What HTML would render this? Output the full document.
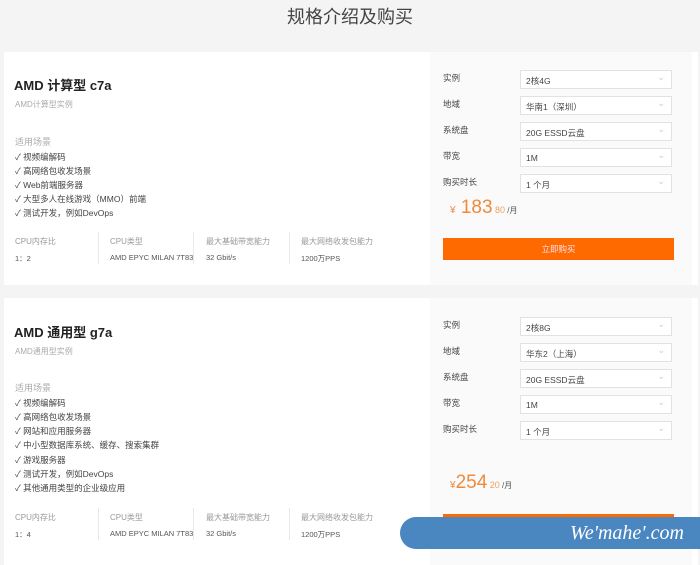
<!DOCTYPE html>
<html><head><meta charset="utf-8"><style>
*{margin:0;padding:0;box-sizing:border-box}
body{width:700px;height:565px;overflow:hidden;background:#f4f4f4;font-family:"Liberation Sans","Noto Sans CJK SC",sans-serif;position:relative;color:#333}
.t{position:absolute;left:0;width:700px;text-align:center;top:3px;font-size:18px;color:#444}
.card{position:absolute;left:4px;width:694px;background:#fff}
.r{position:absolute;left:426px;top:0;bottom:0;right:6px;background:#fafafa}
.a{position:absolute;white-space:nowrap}
h2{position:absolute;left:14px;font-size:13px;font-weight:bold;color:#222}
.sub{font-size:8px;color:#aaa}
.sc{font-size:9px;color:#aaa}
.li{font-size:8.5px;color:#444}
.sl{font-size:8px;color:#999}
.sv{font-size:7.5px;color:#555}
.sep{position:absolute;width:1px;height:32px;background:#e8e8e8}
.lb{font-size:8.5px;color:#444}
.sel{position:absolute;left:520px;width:152px;height:19px;border:1px solid #e2e2e2;background:#fff;font-size:8.5px;color:#444;padding:4px 0 0 5px}
.sel:after{content:"⌄";position:absolute;right:6px;top:1px;color:#ccc;font-size:9px}
.btn{position:absolute;left:443px;width:231px;height:22px;background:#ff6a00;color:#fde;font-size:8.5px;text-align:center;line-height:22px}
.pr{color:#f08a3a}
</style></head><body>
<div class="t">规格介绍及购买</div>

<div class="card" style="top:52px;height:233px"><div class="r"></div></div>
<h2 style="top:75px">AMD 计算型 c7a</h2>
<div class="a sub" style="left:15px;top:99px">AMD计算型实例</div>
<div class="a sc" style="left:15px;top:135px">适用场景</div>
<div class="a li" style="left:15px;top:151px">✓ 视频编解码</div>
<div class="a li" style="left:15px;top:165px">✓ 高网络包收发场景</div>
<div class="a li" style="left:15px;top:179px">✓ Web前端服务器</div>
<div class="a li" style="left:15px;top:193px">✓ 大型多人在线游戏（MMO）前端</div>
<div class="a li" style="left:15px;top:207px">✓ 测试开发，例如DevOps</div>
<div class="a sl" style="left:15px;top:236px">CPU内存比</div><div class="a sv" style="left:15px;top:253px">1：2</div>
<div class="sep" style="left:98px;top:232px"></div>
<div class="a sl" style="left:110px;top:236px">CPU类型</div><div class="a sv" style="left:110px;top:253px">AMD EPYC MILAN 7T83</div>
<div class="sep" style="left:193px;top:232px"></div>
<div class="a sl" style="left:206px;top:236px">最大基础带宽能力</div><div class="a sv" style="left:206px;top:253px">32 Gbit/s</div>
<div class="sep" style="left:289px;top:232px"></div>
<div class="a sl" style="left:301px;top:236px">最大网络收发包能力</div><div class="a sv" style="left:301px;top:253px">1200万PPS</div>

<div class="a lb" style="left:443px;top:72px">实例</div><div class="sel" style="top:70px">2核4G</div>
<div class="a lb" style="left:443px;top:98px">地域</div><div class="sel" style="top:96px">华南1（深圳）</div>
<div class="a lb" style="left:443px;top:124px">系统盘</div><div class="sel" style="top:122px">20G ESSD云盘</div>
<div class="a lb" style="left:443px;top:150px">带宽</div><div class="sel" style="top:148px">1M</div>
<div class="a lb" style="left:443px;top:176px">购买时长</div><div class="sel" style="top:174px">1 个月</div>
<div class="a pr" style="left:450px;top:197px"><span style="font-size:10px">¥</span><span style="font-size:19px"> 183</span><span style="font-size:9px;color:#f0a060"> 80</span><span style="font-size:8px;color:#555"> /月</span></div>
<div class="btn" style="top:238px">立即购买</div>

<div class="card" style="top:298px;height:267px"><div class="r"></div></div>
<h2 style="top:322px">AMD 通用型 g7a</h2>
<div class="a sub" style="left:15px;top:346px">AMD通用型实例</div>
<div class="a sc" style="left:15px;top:381px">适用场景</div>
<div class="a li" style="left:15px;top:397px">✓ 视频编解码</div>
<div class="a li" style="left:15px;top:411px">✓ 高网络包收发场景</div>
<div class="a li" style="left:15px;top:425px">✓ 网站和应用服务器</div>
<div class="a li" style="left:15px;top:439px">✓ 中小型数据库系统、缓存、搜索集群</div>
<div class="a li" style="left:15px;top:454px">✓ 游戏服务器</div>
<div class="a li" style="left:15px;top:468px">✓ 测试开发，例如DevOps</div>
<div class="a li" style="left:15px;top:482px">✓ 其他通用类型的企业级应用</div>
<div class="a sl" style="left:15px;top:512px">CPU内存比</div><div class="a sv" style="left:15px;top:529px">1：4</div>
<div class="sep" style="left:98px;top:508px"></div>
<div class="a sl" style="left:110px;top:512px">CPU类型</div><div class="a sv" style="left:110px;top:529px">AMD EPYC MILAN 7T83</div>
<div class="sep" style="left:193px;top:508px"></div>
<div class="a sl" style="left:206px;top:512px">最大基础带宽能力</div><div class="a sv" style="left:206px;top:529px">32 Gbit/s</div>
<div class="sep" style="left:289px;top:508px"></div>
<div class="a sl" style="left:301px;top:512px">最大网络收发包能力</div><div class="a sv" style="left:301px;top:529px">1200万PPS</div>

<div class="a lb" style="left:443px;top:319px">实例</div><div class="sel" style="top:317px">2核8G</div>
<div class="a lb" style="left:443px;top:345px">地域</div><div class="sel" style="top:343px">华东2（上海）</div>
<div class="a lb" style="left:443px;top:371px">系统盘</div><div class="sel" style="top:369px">20G ESSD云盘</div>
<div class="a lb" style="left:443px;top:397px">带宽</div><div class="sel" style="top:395px">1M</div>
<div class="a lb" style="left:443px;top:423px">购买时长</div><div class="sel" style="top:421px">1 个月</div>
<div class="a pr" style="left:450px;top:472px"><span style="font-size:10px">¥</span><span style="font-size:19px">254</span><span style="font-size:9px;color:#f0a060"> 20</span><span style="font-size:8px;color:#555"> /月</span></div>
<div class="btn" style="top:514px"></div>
<div style="position:absolute;left:400px;top:517px;width:300px;height:32px;background:#4a86c0;border-radius:16px 0 0 16px"></div>
<div class="a" style="left:570px;top:522px;font-family:'Liberation Serif',serif;font-style:italic;font-size:20px;color:#fff">We'mahe'.com</div>
</body></html>
